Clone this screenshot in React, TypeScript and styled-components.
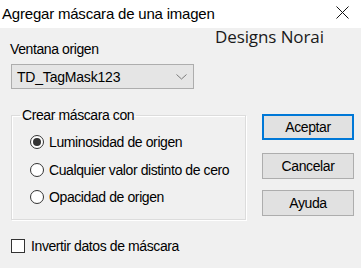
import styled, { createGlobalStyle } from 'styled-components';

const GlobalStyle = createGlobalStyle`
  html, body {
    margin: 0;
    padding: 0;
    background: #f0f0f0;
  }
  body {
    font-family: 'Liberation Sans', Arial, sans-serif;
    color: #000;
  }
`;

const StyledDialog = styled.div`
  position: relative;
  width: 361px;
  height: 268px;
  overflow: hidden;
  background: #f0f0f0;
  display: flex;
  flex-direction: column;
`;

const TitleBar = styled.div`
  height: 28px;
  flex: 0 0 auto;
  background: #fff;
  display: flex;
  align-items: center;
  justify-content: space-between;
  padding: 0 12px 0 2px;

  .title_bar__text {
    font-size: 15px;
    letter-spacing: -0.2px;
    color: #000;
    margin-top: -2px;
  }

  svg {
    margin-top: -4px;
  }
`;

const Watermark = styled.div`
  position: absolute;
  left: 215px;
  top: 25px;
  font-family: 'Open Sans', sans-serif;
  font-size: 17px;
  letter-spacing: -0.1px;
  color: #1a1a1a;
`;

const Body = styled.div`
  display: flex;
  padding: 0 7px 0 11px;
  gap: 16px;
`;

const LeftColumn = styled.div`
  width: 235px;
  display: flex;
  flex-direction: column;
`;

const FieldLabel = styled.div`
  font-size: 14px;
  letter-spacing: -0.4px;
  margin: 14px 0 0 -1px;
  height: 22px;
  line-height: 15px;
`;

const Combo = styled.div`
  width: 183px;
  height: 25px;
  box-sizing: border-box;
  background: #e5e5e5;
  border: 1px solid #adadad;
  display: flex;
  align-items: center;
  justify-content: space-between;
  padding: 0 6px 0 5px;
  font-size: 14px;
  letter-spacing: -0.2px;
`;

const GroupBox = styled.fieldset`
  margin: 18px 0 0;
  padding: 10px 0 0 18px;
  width: 235px;
  height: 113px;
  box-sizing: border-box;
  border: 1px solid #dcdcdc;
  box-shadow: inset 1px 1px 0 #fff, 1px 1px 0 #fff;
  display: flex;
  flex-direction: column;
  gap: 9.5px;

  legend {
    font-size: 14px;
    letter-spacing: -0.4px;
    line-height: 16px;
    padding: 0 2px;
    margin-left: -10px;
  }
`;

const RadioRow = styled.label`
  display: flex;
  align-items: center;
  gap: 5px;
  height: 18px;
  font-size: 14px;
  letter-spacing: -0.4px;
`;

const RadioCircle = styled.span<{ $checked?: boolean }>`
  width: 14px;
  height: 14px;
  box-sizing: border-box;
  border: 1px solid #333;
  border-radius: 50%;
  background: #fff;
  display: flex;
  align-items: center;
  justify-content: center;

  &::after {
    content: '';
    width: 8px;
    height: 8px;
    border-radius: 50%;
    background: #333;
    display: ${({ $checked }) => ($checked ? 'block' : 'none')};
  }
`;

const CheckRow = styled.label`
  display: flex;
  align-items: center;
  gap: 6px;
  margin-top: 18px;
  font-size: 14px;
  letter-spacing: -0.4px;
`;

const CheckBox = styled.span`
  width: 14px;
  height: 14px;
  box-sizing: border-box;
  border: 1px solid #333;
  background: #fff;
`;

const ButtonColumn = styled.div`
  display: flex;
  flex-direction: column;
  margin-top: 86px;
  gap: 11px;
`;

const Button = styled.div<{ $primary?: boolean }>`
  width: 92px;
  height: 26px;
  box-sizing: border-box;
  background: #e1e1e1;
  border: ${({ $primary }) => ($primary ? '2px solid #0078d7' : '1px solid #adadad')};
  display: flex;
  align-items: center;
  justify-content: center;
  font-size: 14px;
  letter-spacing: -0.4px;

  &:first-child {
    margin-bottom: 2px;
  }
`;

function Chevron() {
  return (
    <svg width='11' height='6' viewBox='0 0 11 6'>
      <path d='M0.5 0.5 L5.5 5 L10.5 0.5' fill='none' stroke='#7a7a7a' strokeWidth='1' />
    </svg>
  );
}

function CloseIcon() {
  return (
    <svg width='13' height='13' viewBox='0 0 13 13'>
      <path d='M0.5 0.5 L12.5 12.5 M12.5 0.5 L0.5 12.5' fill='none' stroke='#111' strokeWidth='1' />
    </svg>
  );
}

function App() {
  return (
    <>
      <GlobalStyle />
      <StyledDialog>
        <TitleBar>
          <span className='title_bar__text'>Agregar máscara de una imagen</span>
          <CloseIcon />
        </TitleBar>
        <Watermark>Designs Norai</Watermark>
        <Body>
          <LeftColumn>
            <FieldLabel>Ventana origen</FieldLabel>
            <Combo>
              <span>TD_TagMask123</span>
              <Chevron />
            </Combo>
            <GroupBox>
              <legend>Crear máscara con</legend>
              <RadioRow>
                <RadioCircle $checked />
                Luminosidad de origen
              </RadioRow>
              <RadioRow>
                <RadioCircle />
                Cualquier valor distinto de cero
              </RadioRow>
              <RadioRow>
                <RadioCircle />
                Opacidad de origen
              </RadioRow>
            </GroupBox>
            <CheckRow>
              <CheckBox />
              Invertir datos de máscara
            </CheckRow>
          </LeftColumn>
          <ButtonColumn>
            <Button $primary>Aceptar</Button>
            <Button>Cancelar</Button>
            <Button>Ayuda</Button>
          </ButtonColumn>
        </Body>
      </StyledDialog>
    </>
  );
}

export default App;
